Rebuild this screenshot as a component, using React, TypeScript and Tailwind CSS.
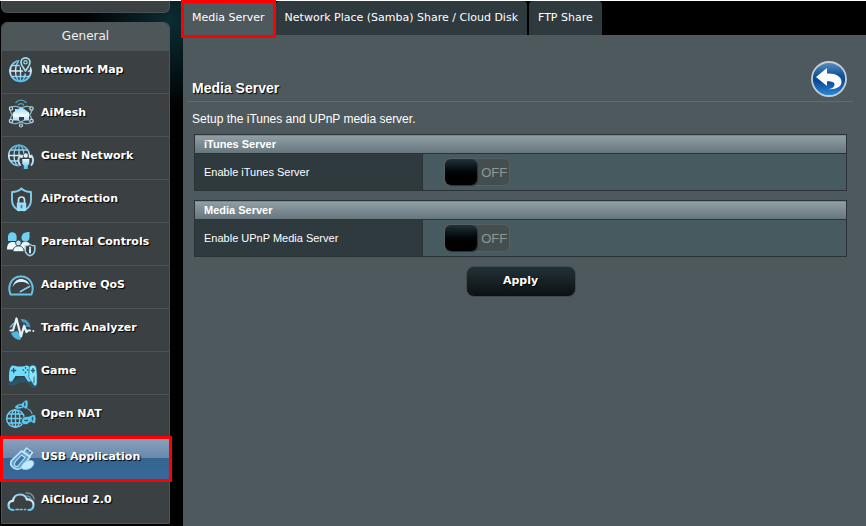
import { useState } from 'react'
import type { ReactNode } from 'react'

function Icon({ children }: { children: ReactNode }) {
  return (
    <svg
      viewBox="0 0 32 32"
      className="w-8 h-8 flex-shrink-0"
      fill="none"
      stroke="url(#ice)"
      strokeWidth="1.7"
      strokeLinecap="round"
      strokeLinejoin="round"
      aria-hidden="true"
    >
      {children}
    </svg>
  )
}

function Gradients() {
  return (
    <svg width="0" height="0" className="absolute" aria-hidden="true">
      <defs>
        <linearGradient id="ice" gradientUnits="userSpaceOnUse" x1="0" y1="4" x2="0" y2="27">
          <stop offset="0" stopColor="#4fb2da" />
          <stop offset="0.5" stopColor="#d6effa" />
          <stop offset="1" stopColor="#4dbcec" />
        </linearGradient>
        <linearGradient id="sky" gradientUnits="userSpaceOnUse" x1="0" y1="8" x2="0" y2="27">
          <stop offset="0" stopColor="#7fd4f5" />
          <stop offset="0.5" stopColor="#f2fbff" />
          <stop offset="1" stopColor="#5cc4ee" />
        </linearGradient>
      </defs>
    </svg>
  )
}

function NetworkMapIcon() {
  return (
    <Icon>
      <circle cx="14.5" cy="16" r="10.5" />
      <ellipse cx="14.5" cy="16" rx="5" ry="10.5" strokeWidth="1.4" />
      <path d="M14.5 5.5v21M4 16h21M6 10.500h17M6 21.500h17" strokeWidth="1.4" />
      <path d="M19.500 17c-2-4-4.800-6-4.800-9.700a4.800 4.800 0 0 1 9.600 0c0 3.700-2.800 5.700-4.800 9.700z" fill="#3b4043" stroke="#3b4043" strokeWidth="3.500" />
      <path d="M19.500 16c-2-3.500-4.500-5.500-4.500-8.700a4.500 4.500 0 0 1 9 0c0 3.200-2.500 5.200-4.500 8.700z" fill="#3b4043" stroke="#a5daef" />
      <circle cx="19.500" cy="7.300" r="1.700" fill="#3b4043" stroke="#a5daef" strokeWidth="1.200" />
    </Icon>
  )
}

function AiMeshIcon() {
  return (
    <Icon>
      <path d="M10 4.500c2.500-3.300 7.500-3.300 10 0M12.500 6.800c1.500-1.700 3.500-1.700 5 0" stroke="#5b9db8" strokeWidth="1.300" />
      <ellipse cx="15" cy="17" rx="12.500" ry="6" transform="rotate(35 15 17)" stroke="#8fb4c2" strokeWidth="1.200" />
      <ellipse cx="15" cy="17" rx="12.500" ry="6" transform="rotate(-35 15 17)" stroke="#8fb4c2" strokeWidth="1.200" />
      <path d="M7 14.500l2-1V11h2.500v1L15 9l8 5.500V22.500h-5v-3.500h-5v3.500H7z" fill="url(#sky)" stroke="none" />
      <g fill="#3b4043" stroke="#b9dcea" strokeWidth="1.200">
        <circle cx="5" cy="10.500" r="1.700" />
        <circle cx="25.500" cy="10.500" r="1.700" />
        <circle cx="5" cy="23" r="1.700" />
        <circle cx="25.500" cy="23" r="1.700" />
        <circle cx="15" cy="27.500" r="1.500" />
      </g>
    </Icon>
  )
}

function GuestIcon() {
  return (
    <Icon>
      <circle cx="13" cy="14.500" r="10.300" strokeWidth="1.500" />
      <ellipse cx="13" cy="14.500" rx="5" ry="10.300" strokeWidth="1.300" />
      <path d="M13 4v21M2.500 14.500h21M5 9h16M5 20h16" strokeWidth="1.300" />
      <path d="M12.500 15h15v11h-15z" fill="#3b4043" stroke="none" />
      <path d="M14 14.500c-2 3-2 7 0 9.500M25.500 14.500c2 3 2 7 0 9.500" stroke="#b7e3f3" strokeWidth="2" />
      <circle cx="15.500" cy="15.500" r="1.600" fill="#d9f2fc" stroke="none" />
      <circle cx="24.200" cy="15.500" r="1.600" fill="#d9f2fc" stroke="none" />
      <circle cx="19.800" cy="14.500" r="2.600" fill="#d9f2fc" stroke="#3b4043" strokeWidth="0.700" />
      <path d="M16.300 18h7v5l-1.500 1.500v3.500h-4v-3.500l-1.500-1.500z" fill="url(#sky)" stroke="none" />
    </Icon>
  )
}

function ProtectionIcon() {
  return (
    <Icon>
      <path d="M15.500 4.500c2.500 2.400 5.500 3.500 9.500 3.500v8c0 5-3 8.500-7 10.500M15.500 4.500C13 6.900 10 8 6 8v8c0 5 3 8.500 7 10.500" strokeWidth="1.900" stroke="#82cdec" />
      <path d="M12.500 18.500v-2.500a3 3 0 0 1 6 0v2.500" strokeWidth="1.700" stroke="#bfe6f5" />
      <rect x="10.800" y="18.500" width="9.400" height="8.500" rx="1" fill="#9be0fb" stroke="none" />
      <path d="M15.500 21.500v2" stroke="#2a87b5" />
    </Icon>
  )
}

function ParentalIcon() {
  return (
    <Icon>
      <g stroke="none">
        <path d="M2 14V9.500a4.300 4.300 0 0 1 8.600 0V14z" fill="#6fd0f4" />
        <path d="M15.500 11c0-4 2.500-6 8-6v5.500c0 2.500-2 4.300-4 4.300s-4-1.300-4-3.800z" fill="#6fd0f4" />
        <path d="M1 22.500c0-5.500 2-7.500 5.500-7.500s5.500 2 5.500 5v2.500z" fill="#f0fafe" />
        <path d="M13.500 20.500c0-4 2.500-5.500 6-5.500s5.500 2 5.500 5v2.500H13.500z" fill="#f0fafe" />
      </g>
      <circle cx="12.500" cy="16" r="2.900" fill="#bdeafa" stroke="#3b4043" strokeWidth="0.900" />
      <path d="M7 24.500c0-4 2.500-5.500 5.500-5.500s5.500 1.500 5.500 5.500z" fill="#e8f8ff" stroke="#3b4043" strokeWidth="0.900" />
      <path d="M24 17.500c1.500 1 3 1.300 4.800 1.300v4c0 3-2 5-4.800 6-2.800-1-4.800-3-4.800-6v-4c1.800 0 3.300-.3 4.800-1.300z" fill="#3b4043" stroke="#9dd5ea" strokeWidth="1.500" />
      <path d="M24 20.500v.4M24 22.500v3" stroke="#cdeefa" strokeWidth="2" />
    </Icon>
  )
}

function QosIcon() {
  return (
    <Icon>
      <path d="M4.500 24.500C1 15 6 6.500 15 6.500S29 15 25.500 24.500z" stroke="#69c1e4" strokeWidth="2" />
      <path d="M6.500 17.500c1-6 5-8.500 8.500-8.500s7.500 2.200 8.500 6c-3-2.500-5.500-3-8.500-3-4 0-6.500 1.300-8.500 5.500z" fill="#d9f2fc" stroke="none" />
      <path d="M14.500 21.500L23.500 16.500" stroke="#7fcdea" strokeWidth="1.800" />
    </Icon>
  )
}

function TrafficIcon() {
  return (
    <Icon>
      <path d="M14.500 6c5.500-.5 9.500 3 10 8.500l-3-1-2.500 1z" fill="#4e9cbd" stroke="none" />
      <path d="M16 10c2-.5 3.500.5 4 2" stroke="#3b4043" strokeWidth="1.200" />
      <path d="M5 20c1.500 4 5 7 9.500 7l.5-4-4-5z" fill="#4fb9e6" stroke="none" />
      <path d="M4.500 17.500h2.500l3.500-12 4.500 18 3-10.500 2.500 6 1.500-1.500h2" strokeWidth="2.200" stroke="#e0f3fb" />
      <path d="M4.500 14l3-3.500" stroke="#7fb9d0" strokeWidth="1.500" />
      <circle cx="27.300" cy="18" r="1" fill="#dff4fc" stroke="none" />
    </Icon>
  )
}

function GameIcon() {
  return (
    <Icon>
      <path d="M5 27h3l6-3h8l6 6" stroke="#0b7fae" strokeWidth="5" opacity="0.350" />
      <path d="M7 9.500c2 0 3 1 4.500 1h5c1.500 0 2.500-1 4.500-1 3 0 4.500 5 4.500 13 0 4-3 4-4.500 1.500L18.500 20h-9L7 24c-1.500 2.500-4 2.500-4-1.500 0-8 1-13 4-13z" fill="#6fdcfd" stroke="none" />
      <path d="M23.500 11c1.200-2 4-2.500 5.800-1 1.800 2 2 9 1.700 17 0 3.500-3 3.500-4 1l-4-6z" fill="#8ee5ff" stroke="#2a6a82" strokeWidth="0.700" />
      <g stroke="#1f5e78" strokeWidth="1.400">
        <path d="M7.700 12.500v4M5.700 14.500h4M27 12.500v4M25.500 14.500h3" />
      </g>
      <path d="M19.500 11.700v.2M19.500 16.400v.2M17.200 14h.2M21.600 14h.2" stroke="#1f5e78" strokeWidth="1.600" />
      <path d="M28 21v6" stroke="#2a6a82" strokeWidth="1" />
    </Icon>
  )
}

function OpenNatIcon() {
  return (
    <Icon>
      <g stroke="#6bcdf2" strokeWidth="1.400">
        <circle cx="9.500" cy="19.500" r="8.800" />
        <ellipse cx="9.500" cy="19.500" rx="4.300" ry="8.800" />
        <path d="M9.500 10.500v18M.7 19.500h17.600M2.500 15h14M2.500 24h14" />
      </g>
      <path d="M8.500 8c2-3 4.500-3 6.500-3.500S18.500 1 21 .8c1.500.5 1.300 6 .5 8.700-1 1-2.500.5-3.500-.8-1.500.3-2.500 1-4 1.300-2 .3-5 .5-5.500-2z" fill="#5dc8ef" stroke="#3b4043" strokeWidth="0.800" />
      <path d="M15.500 21c1.500-3.500 4-3.500 6-3.500 2.500 0 4.500-2.500 7-2 2 1.500 1.500 6 1 8-1 1.500-3 1-4-.5-2 0-3 2-5 2.500-3 .5-6-1-5-4.500z" fill="#5dc8ef" stroke="#3b4043" strokeWidth="0.800" />
      <path d="M13 7.200h2.500M18.800 4v2.500M19 21.500h2.500M26.500 18.500v2.500" stroke="#1f5e78" strokeWidth="1.500" />
      <path d="M22 10c2.500 1 3.500 2.500 4 4.500" stroke="#6bb0cb" strokeWidth="1.200" />
    </Icon>
  )
}

function UsbIcon() {
  return (
    <Icon>
      <path d="M20.500 6l6 4.500-3 4-6-4.500z" strokeWidth="1.400" fill="#7ba6c8" stroke="#c5e6f5" />
      <path d="M15.500 9l8.500 6-8.500 10.500c-2 2-5.500 2-8 .3s-3.500-4.500-2-7.300z" fill="#5d9fcf" stroke="#c3e7f7" />
      <path d="M15.500 13l3.500 2.500-7 8.500c-1 1-3 .5-3.500-1s0-2 1-3.500z" fill="#3c76a8" stroke="#bfe4f6" strokeWidth="1.100" />
      <path d="M15.500 24c1-3 4.500-5.500 8.500-5.500 3 0 4.500 1.500 3.500 4.200-1.500 3.500-5 4.800-8 4.800-3.500 0-5-1.500-4-3.500z" fill="#c5eafb" stroke="#8fc9e8" strokeWidth="1" />
      <path d="M21.500 8.700h.1M24 10.500h.1" stroke="#28608f" />
    </Icon>
  )
}

function CloudIcon() {
  return (
    <Icon>
      <path d="M7.500 25c-3 0-5-2-5-4.600 0-2.700 2-4.400 4.500-4.600.5-4 3.500-6.300 7-6.300 3.300 0 6 2 6.800 5 3.700-.3 6.700 1.500 6.700 5.200 0 3.300-2 5.300-5 5.300" strokeWidth="2.200" />
      <path d="M10 24.500h2.500M14.500 24.500h1.500M18.500 24.500h1" stroke="#8ebfd2" strokeWidth="1.700" />
      <path d="M20 8c4-.5 7.500 2 8 6M20.500 11c2.500 0 4 1 4.500 3" stroke="#6c94a6" strokeWidth="1.500" />
    </Icon>
  )
}

const menu = [
  { name: 'Network Map', icon: <NetworkMapIcon /> },
  { name: 'AiMesh', icon: <AiMeshIcon /> },
  { name: 'Guest Network', icon: <GuestIcon /> },
  { name: 'AiProtection', icon: <ProtectionIcon /> },
  { name: 'Parental Controls', icon: <ParentalIcon /> },
  { name: 'Adaptive QoS', icon: <QosIcon /> },
  { name: 'Traffic Analyzer', icon: <TrafficIcon /> },
  { name: 'Game', icon: <GameIcon /> },
  { name: 'Open NAT', icon: <OpenNatIcon /> },
  { name: 'USB Application', icon: <UsbIcon />, active: true },
  { name: 'AiCloud 2.0', icon: <CloudIcon /> },
]

const tabs = ['Media Server', 'Network Place (Samba) Share / Cloud Disk', 'FTP Share']

function Sidebar() {
  return (
    <aside className="w-[169px] flex-shrink-0 ml-px">
      <div className="h-3 rounded-b-md border border-t-0 border-[#4a5154] bg-[#3b4043]" />
      <nav className="mt-[9px] rounded-t-md border border-[#4d5457] bg-[#3b4043]" aria-label="General">
        <h2 className="h-[27px] rounded-t-md bg-[#4d5659] text-center text-[12px] leading-[26px] text-[#f0f0f0]">General</h2>
        {menu.map((m) => (
          <a
            key={m.name}
            href="#"
            className={
              m.active
                ? 'relative flex items-center gap-[3px] h-[43px] pl-1 pb-[3px] border-t border-[#4d5457] bg-[linear-gradient(#8aa2bf,#6788aa_48%,#35648f_48%,#38689b)] text-[11px] font-bold text-white [text-shadow:1px_1px_1px_#000]'
                : 'flex items-center gap-[3px] h-[43px] pl-1 pb-[3px] border-t border-[#4d5457] text-[11px] font-bold text-white [text-shadow:1px_1px_1px_#000]'
            }
          >
            {m.icon}
            {m.name}
            {m.active && <span className="absolute -left-0.5 -right-[3px] -inset-y-0.5 border-[3px] border-[#ff0000]" />}
          </a>
        ))}
      </nav>
    </aside>
  )
}

function Toggle({ id }: { id: string }) {
  const [on, setOn] = useState(false)
  return (
    <label className="relative flex items-center w-[66px] h-7 rounded-md border border-[#566062] bg-[#444e4f] cursor-pointer">
      <input
        id={id}
        type="checkbox"
        role="switch"
        className="sr-only"
        checked={on}
        onChange={(e) => setOn(e.target.checked)}
      />
      <span
        className={
          on
            ? 'order-2 w-8 h-[26px] rounded-md bg-linear-to-b from-[#22343a] to-black to-80%'
            : 'w-8 h-[26px] rounded-md bg-linear-to-b from-[#22343a] to-black to-80% shadow-[1px_1px_1px_#2b3435]'
        }
      />
      <span className="flex-1 pl-0.5 pt-0.5 text-center text-[13px] text-[#8f9899]">{on ? 'ON' : 'OFF'}</span>
    </label>
  )
}

function Setting({ title, label, id }: { title: string; label: string; id: string }) {
  return (
    <table className="w-full border-collapse border border-[#2b3336] text-[11px]">
      <thead>
        <tr>
          <th colSpan={2} className="h-[19px] pl-[9px] border border-[#2b3336] bg-linear-to-b from-[#92a0a5] to-[#66757c] text-left font-bold leading-[17px]">
            {title}
          </th>
        </tr>
      </thead>
      <tbody>
        <tr>
          <th scope="row" className="w-[35%] h-[37px] pl-[9px] border border-[#2b3336] bg-[#2f3a3e] text-left font-normal">
            <label htmlFor={id}>{label}</label>
          </th>
          <td className="pl-[21px] border border-[#2b3336] bg-[#475a5f]">
            <Toggle id={id} />
          </td>
        </tr>
      </tbody>
    </table>
  )
}

function BackIcon() {
  return (
    <svg viewBox="0 0 36 36" className="w-9 h-9" aria-hidden="true">
      <defs>
        <linearGradient id="blue" x1="0" y1="0" x2="0" y2="1">
          <stop offset="0" stopColor="#5d8fc0" />
          <stop offset="0.4" stopColor="#11529a" />
          <stop offset="0.55" stopColor="#0a4a96" />
          <stop offset="1" stopColor="#2b8ae0" />
        </linearGradient>
      </defs>
      <circle cx="18" cy="18" r="17" fill="url(#blue)" stroke="#c6ced2" strokeWidth="1.800" />
      <path d="M5 16L16 7v5.500c8-.5 14.500 2.500 14.500 8.500 0 4.700-5.500 7.700-13 7.200 4-.8 6-2.200 6-4.500 0-2.700-3-3.500-7.500-3.400V25z" fill="#fff" />
    </svg>
  )
}

export default function App() {
  return (
    <div className="min-h-screen flex gap-[13px] border-t border-white bg-black bg-[radial-gradient(circle_at_170px_20px,#0b2c33,#000_90px)] font-['DejaVu_Sans',Verdana,sans-serif] text-white">
      <Gradients />
      <Sidebar />
      <div className="flex-1 min-w-0 flex flex-col">
        <div className="flex gap-0.5">
          {tabs.map((t, i) => (
            <button
              key={t}
              type="button"
              className={
                i === 0
                  ? 'relative h-[34px] px-[9px] rounded-t bg-[#4d595d] text-[11px] whitespace-nowrap'
                  : 'h-[34px] px-[9px] rounded-t bg-[#2f3a3e] text-[11px] whitespace-nowrap'
              }
            >
              {t}
              {i === 0 && <span className="absolute -left-0.5 -right-0.5 -top-px -bottom-[3px] border-[3px] border-[#ff0000]" />}
            </button>
          ))}
        </div>
        <main className="flex-1 bg-[#4d595d] pt-[26px] font-['Liberation_Sans',Arial,sans-serif]">
          <header className="flex items-end justify-between ml-1 mr-[13px] pl-[5px] pr-[6px] border-b border-[#5c6e74]">
            <h1 className="pb-1 text-[14px] leading-[18px] font-bold [text-shadow:1px_1px_1px_#000]">Media Server</h1>
            <button type="button" aria-label="Back" className="mb-1">
              <BackIcon />
            </button>
          </header>
          <p className="mt-[7px] ml-[9px] text-[12px] leading-5">Setup the iTunes and UPnP media server.</p>
          <form className="ml-[11px] mr-[19px] mt-[5px] flex flex-col gap-[9px]" onSubmit={(e) => e.preventDefault()}>
            <Setting title="iTunes Server" label="Enable iTunes Server" id="itunes" />
            <Setting title="Media Server" label="Enable UPnP Media Server" id="upnp" />
            <button
              type="submit"
              className="self-center w-[110px] h-[31px] rounded-lg border border-[#3d4a4e] bg-linear-to-b from-[#223237] to-[#0d1112] font-['DejaVu_Sans',Verdana,sans-serif] text-[11px] font-bold [text-shadow:1px_1px_0_#000]"
            >
              Apply
            </button>
          </form>
        </main>
      </div>
    </div>
  )
}
